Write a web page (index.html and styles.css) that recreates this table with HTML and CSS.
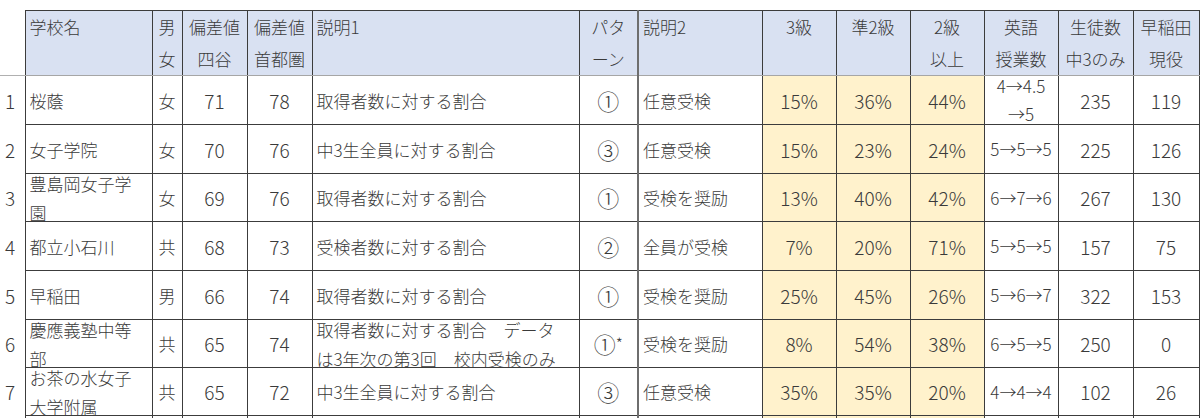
FILE: index.html
```html
<!DOCTYPE html>
<html lang="ja">
<head>
<meta charset="utf-8">
<title>英検取得率</title>
<link rel="stylesheet" href="styles.css">
</head>
<body>
<table class="sheet">
  <colgroup>
    <col class="w-rn"><col class="w-name"><col class="w-sex"><col class="w-dev"><col class="w-dev">
    <col class="w-d1"><col class="w-pat"><col class="w-d2"><col class="w-pc"><col class="w-pc">
    <col class="w-pc"><col class="w-pc"><col class="w-stu"><col class="w-wa">
  </colgroup>
  <thead>
    <tr class="hr">
      <th class="rn"></th>
      <th class="hl">学校名</th>
      <th>男<br>女</th>
      <th>偏差値<br>四谷</th>
      <th>偏差値<br>首都圏</th>
      <th class="hl">説明1</th>
      <th>パタ<br>ーン</th>
      <th class="hl lft">説明2</th>
      <th>3級</th>
      <th>準2級</th>
      <th>2級<br>以上</th>
      <th>英語<br>授業数</th>
      <th>生徒数<br>中3のみ</th>
      <th>早稲田<br>現役</th>
    </tr>
  </thead>
  <tbody>
    <tr class="r49">
      <td class="rn"><div class="c">1</div></td>
      <td class="jp"><div class="c">桜蔭</div></td>
      <td class="ctr"><div class="c">女</div></td>
      <td class="num"><div class="c">71</div></td>
      <td class="num"><div class="c">78</div></td>
      <td class="jp"><div class="c">取得者数に対する割合</div></td>
      <td class="ctr"><div class="c"><span class="circ">①</span></div></td>
      <td class="jp lft"><div class="c">任意受検</div></td>
      <td class="num pct"><div class="c">15%</div></td>
      <td class="num pct"><div class="c">36%</div></td>
      <td class="num pct"><div class="c">44%</div></td>
      <td class="arw"><div class="c">4→4.5<br>→5</div></td>
      <td class="num"><div class="c">235</div></td>
      <td class="num"><div class="c">119</div></td>
    </tr>
    <tr class="r49">
      <td class="rn"><div class="c">2</div></td>
      <td class="jp"><div class="c">女子学院</div></td>
      <td class="ctr"><div class="c">女</div></td>
      <td class="num"><div class="c">70</div></td>
      <td class="num"><div class="c">76</div></td>
      <td class="jp"><div class="c">中3生全員に対する割合</div></td>
      <td class="ctr"><div class="c"><span class="circ">③</span></div></td>
      <td class="jp lft"><div class="c">任意受検</div></td>
      <td class="num pct"><div class="c">15%</div></td>
      <td class="num pct"><div class="c">23%</div></td>
      <td class="num pct"><div class="c">24%</div></td>
      <td class="arw"><div class="c">5→5→5</div></td>
      <td class="num"><div class="c">225</div></td>
      <td class="num"><div class="c">126</div></td>
    </tr>
    <tr class="r48">
      <td class="rn"><div class="c">3</div></td>
      <td class="jp"><div class="c">豊島岡女子学<br>園</div></td>
      <td class="ctr"><div class="c">女</div></td>
      <td class="num"><div class="c">69</div></td>
      <td class="num"><div class="c">76</div></td>
      <td class="jp"><div class="c">取得者数に対する割合</div></td>
      <td class="ctr"><div class="c"><span class="circ">①</span></div></td>
      <td class="jp lft"><div class="c">受検を奨励</div></td>
      <td class="num pct"><div class="c">13%</div></td>
      <td class="num pct"><div class="c">40%</div></td>
      <td class="num pct"><div class="c">42%</div></td>
      <td class="arw"><div class="c">6→7→6</div></td>
      <td class="num"><div class="c">267</div></td>
      <td class="num"><div class="c">130</div></td>
    </tr>
    <tr class="r49">
      <td class="rn"><div class="c">4</div></td>
      <td class="jp"><div class="c">都立小石川</div></td>
      <td class="ctr"><div class="c">共</div></td>
      <td class="num"><div class="c">68</div></td>
      <td class="num"><div class="c">73</div></td>
      <td class="jp"><div class="c">受検者数に対する割合</div></td>
      <td class="ctr"><div class="c"><span class="circ">②</span></div></td>
      <td class="jp lft"><div class="c">全員が受検</div></td>
      <td class="num pct"><div class="c">7%</div></td>
      <td class="num pct"><div class="c">20%</div></td>
      <td class="num pct"><div class="c">71%</div></td>
      <td class="arw"><div class="c">5→5→5</div></td>
      <td class="num"><div class="c">157</div></td>
      <td class="num"><div class="c">75</div></td>
    </tr>
    <tr class="r49">
      <td class="rn"><div class="c">5</div></td>
      <td class="jp"><div class="c">早稲田</div></td>
      <td class="ctr"><div class="c">男</div></td>
      <td class="num"><div class="c">66</div></td>
      <td class="num"><div class="c">74</div></td>
      <td class="jp"><div class="c">取得者数に対する割合</div></td>
      <td class="ctr"><div class="c"><span class="circ">①</span></div></td>
      <td class="jp lft"><div class="c">受検を奨励</div></td>
      <td class="num pct"><div class="c">25%</div></td>
      <td class="num pct"><div class="c">45%</div></td>
      <td class="num pct"><div class="c">26%</div></td>
      <td class="arw"><div class="c">5→6→7</div></td>
      <td class="num"><div class="c">322</div></td>
      <td class="num"><div class="c">153</div></td>
    </tr>
    <tr class="r48">
      <td class="rn"><div class="c">6</div></td>
      <td class="jp"><div class="c">慶應義塾中等<br>部</div></td>
      <td class="ctr"><div class="c">共</div></td>
      <td class="num"><div class="c">65</div></td>
      <td class="num"><div class="c">74</div></td>
      <td class="jp"><div class="c">取得者数に対する割合　データ<br>は3年次の第3回　校内受検のみ</div></td>
      <td class="ctr"><div class="c"><span class="circ">①</span><span class="ast">*</span></div></td>
      <td class="jp lft"><div class="c">受検を奨励</div></td>
      <td class="num pct"><div class="c">8%</div></td>
      <td class="num pct"><div class="c">54%</div></td>
      <td class="num pct"><div class="c">38%</div></td>
      <td class="arw"><div class="c">6→5→5</div></td>
      <td class="num"><div class="c">250</div></td>
      <td class="num"><div class="c">0</div></td>
    </tr>
    <tr class="r48">
      <td class="rn"><div class="c">7</div></td>
      <td class="jp"><div class="c">お茶の水女子<br>大学附属</div></td>
      <td class="ctr"><div class="c">共</div></td>
      <td class="num"><div class="c">65</div></td>
      <td class="num"><div class="c">72</div></td>
      <td class="jp"><div class="c">中3生全員に対する割合</div></td>
      <td class="ctr"><div class="c"><span class="circ">③</span></div></td>
      <td class="jp lft"><div class="c">任意受検</div></td>
      <td class="num pct"><div class="c">35%</div></td>
      <td class="num pct"><div class="c">35%</div></td>
      <td class="num pct"><div class="c">20%</div></td>
      <td class="arw"><div class="c">4→4→4</div></td>
      <td class="num"><div class="c">102</div></td>
      <td class="num"><div class="c">26</div></td>
    </tr>
    <tr class="r48">
      <td class="rn"><div class="c"></div></td>
      <td class="jp"><div class="c"></div></td>
      <td class="ctr"><div class="c"></div></td>
      <td class="num"><div class="c"></div></td>
      <td class="num"><div class="c"></div></td>
      <td class="jp"><div class="c"></div></td>
      <td class="ctr"><div class="c"></div></td>
      <td class="jp lft"><div class="c"></div></td>
      <td class="num pct"><div class="c"></div></td>
      <td class="num pct"><div class="c"></div></td>
      <td class="num pct"><div class="c"></div></td>
      <td class="arw"><div class="c"></div></td>
      <td class="num"><div class="c"></div></td>
      <td class="num"><div class="c"></div></td>
    </tr>
  </tbody>
</table>
</body>
</html>
```

FILE: styles.css
```css
html, body {
  margin: 0;
  padding: 0;
  background: #ffffff;
  overflow: hidden;
}

body {
  padding-top: 10px;
  font-family: "Noto Sans CJK JP", "Noto Sans", sans-serif;
  font-weight: 300;
  color: #3a3a3a;
}

.sheet {
  border-collapse: collapse;
  table-layout: fixed;
  width: 1199px;
}

.w-rn { width: 25px; }
.w-name { width: 127px; }
.w-sex { width: 30px; }
.w-dev { width: 65px; }
.w-d1 { width: 267px; }
.w-pat { width: 59px; }
.w-d2 { width: 124px; }
.w-pc { width: 74px; }
.w-stu { width: 75px; }
.w-wa { width: 66px; }

.sheet th,
.sheet td {
  padding: 0;
  border: 1px solid #3c3c3c;
  overflow: visible;
}

/* header */
.hr { height: 64px; }

.sheet th {
  background: #d9e1f2;
  font-weight: 300;
  font-size: 17px;
  line-height: 32px;
  vertical-align: top;
  text-align: center;
  border-bottom: 1px solid #a6a6a6;
  white-space: nowrap;
}

.sheet th.hl {
  text-align: left;
  padding-left: 4px;
}

.sheet th.rn {
  background: #ffffff;
  border-top: none;
  border-left: none;
  border-bottom: 1px solid #b0b0b0;
}

.sheet th.lft,
.sheet td.lft {
  border-left: 2px solid #6e6e6e;
}

/* body rows */
.r49 { height: 49px; }
.r48 { height: 48px; }

.c {
  height: 47px;
  display: flex;
  align-items: center;
  line-height: 29px;
  white-space: nowrap;
}

.sheet td.rn {
  border: none;
  font-size: 19px;
}

.sheet td.rn .c {
  padding-left: 5px;
}

.jp {
  font-size: 17px;
}

.jp .c {
  padding-left: 4px;
}

.ctr {
  font-size: 17px;
}

.ctr .c,
.num .c,
.arw .c {
  justify-content: center;
  text-align: center;
}

.circ {
  font-size: 22px;
}

.ast {
  font-size: 16px;
  align-self: flex-start;
  margin-top: 9px;
}

.num {
  font-size: 19px;
}

.arw {
  font-size: 17px;
}

.arw .c {
  line-height: 28px;
}

.pct {
  background: #fff2cc;
}
```
